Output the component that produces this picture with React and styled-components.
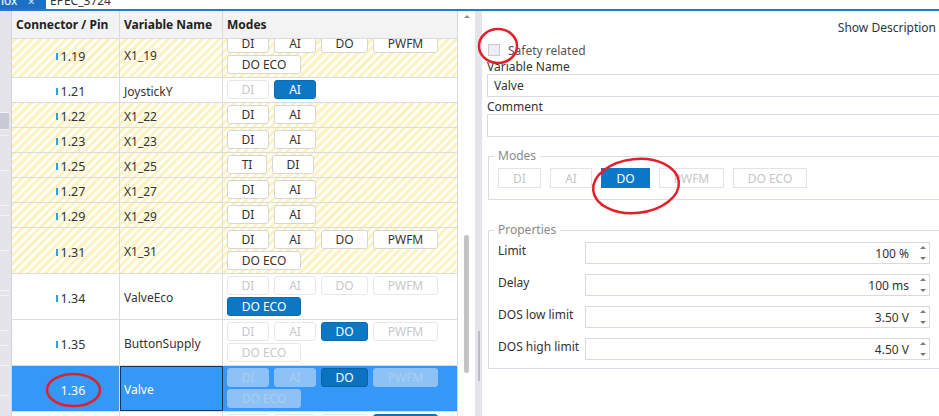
import React from 'react';
import styled, { createGlobalStyle } from 'styled-components';

const GlobalStyle = createGlobalStyle`
  html, body {
    margin: 0;
    padding: 0;
    background: #fff;
  }
  body {
    font-family: 'Noto Sans', 'Open Sans', sans-serif;
    font-size: 12px;
    color: #333;
  }
  * {
    box-sizing: border-box;
  }
`;

const modeWidths = { DI: 42, AI: 42, TI: 40, DO: 47, PWFM: 65, 'DO ECO': 74 };
const panelModeWidths = { DI: 43, AI: 42, DO: 49, PWFM: 65, 'DO ECO': 74 };
const allModes = ['DI', 'AI', 'DO', 'PWFM', 'DO ECO'];

const rows = [
    { pin: '1.19', name: 'X1_19', modes: allModes, hatch: true },
    { pin: '1.21', name: 'JoystickY', modes: ['DI', 'AI'], active: 'AI' },
    { pin: '1.22', name: 'X1_22', modes: ['DI', 'AI'], hatch: true },
    { pin: '1.23', name: 'X1_23', modes: ['DI', 'AI'], hatch: true },
    { pin: '1.25', name: 'X1_25', modes: ['TI', 'DI'], hatch: true },
    { pin: '1.27', name: 'X1_27', modes: ['DI', 'AI'], hatch: true },
    { pin: '1.29', name: 'X1_29', modes: ['DI', 'AI'], hatch: true },
    { pin: '1.31', name: 'X1_31', modes: allModes, hatch: true },
    { pin: '1.34', name: 'ValveEco', modes: allModes, active: 'DO ECO' },
    { pin: '1.35', name: 'ButtonSupply', modes: allModes, active: 'DO' },
    { pin: '1.36', name: 'Valve', modes: allModes, active: 'DO', selected: true },
    { pin: '1.37', name: 'Buzzer', modes: allModes, active: 'PWFM' },
];

const properties = [
    { label: 'Limit', value: '100 %' },
    { label: 'Delay', value: '100 ms' },
    { label: 'DOS low limit', value: '3.50 V' },
    { label: 'DOS high limit', value: '4.50 V' },
];

const SpinArrows = () => (
    <svg width="6" height="16" viewBox="0 0 6 16">
        <path d="M3 1 L6 4 L0 4 Z" fill="#7a7a7a" />
        <path d="M0 12 L6 12 L3 15 Z" fill="#7a7a7a" />
    </svg>
);

const ModeButton = ({ label, row }) => {
    let state = 'normal';
    if (row.active) state = row.active === label ? 'active' : 'off';
    return (
        <CellButton $w={modeWidths[label]} $state={state} $selected={row.selected}>
            {label}
        </CellButton>
    );
};

const App = () => {
    return (
        <>
            <GlobalStyle />
            <Page>
                <TabBar>
                    <Tab $active>
                        <span>lox</span>
                        <TabClose>×</TabClose>
                    </Tab>
                    <Tab>
                        <span>EPEC_3724</span>
                    </Tab>
                </TabBar>
                <TabLine />
                <Main>
                    <SideStrip>
                        <StripBlock $h={102} />
                        <StripBlock $h={17} $dark />
                        <StripBlock $h={6} />
                        <StripBlock $h={35} />
                        <StripBlock $h={35} />
                        <StripBlock $h={10} />
                        <StripBlock $h={35} />
                        <StripBlock $h={40} />
                        <StripBlock $h={5} />
                        <StripBlock $h={35} />
                        <StripBlock $h={15} />
                        <StripBlock $h={20} />
                        <StripBlock $h={30} />
                    </SideStrip>
                    <TablePane>
                        <HeaderRow>
                            <HeaderCell>Connector / Pin</HeaderCell>
                            <HeaderCell>Variable Name</HeaderCell>
                            <HeaderCell>Modes</HeaderCell>
                        </HeaderRow>
                        <BodyViewport>
                            <BodyScroll>
                                {rows.map((row) => (
                                    <Row key={row.pin} $hatch={row.hatch} $selected={row.selected}>
                                        <PinCell $selected={row.selected}>
                                            <Tick />
                                            {row.pin}
                                        </PinCell>
                                        <NameCell $selected={row.selected}>{row.name}</NameCell>
                                        <ModesCell>
                                            {row.modes.map((m) => (
                                                <ModeButton key={m} label={m} row={row} />
                                            ))}
                                        </ModesCell>
                                    </Row>
                                ))}
                            </BodyScroll>
                        </BodyViewport>
                    </TablePane>
                    <ScrollBar>
                        <ArrowUp />
                        <Thumb />
                    </ScrollBar>
                    <Splitter>
                        <Grip />
                    </Splitter>
                    <RightPane>
                        <ShowDesc>Show Description</ShowDesc>
                        <CheckRow>
                            <CheckBox />
                            <CheckLabel>Safety related</CheckLabel>
                        </CheckRow>
                        <FieldLabel>Variable Name</FieldLabel>
                        <TextInput>Valve</TextInput>
                        <FieldLabel $top={2}>Comment</FieldLabel>
                        <TextInput />
                        <GroupBox $top={11} $bottom={11}>
                            <Legend>Modes</Legend>
                            <ModeBar>
                                {allModes.map((m) => (
                                    <PanelMode key={m} $w={panelModeWidths[m]} $active={m === 'DO'}>
                                        {m}
                                    </PanelMode>
                                ))}
                            </ModeBar>
                        </GroupBox>
                        <GroupBox $top={22} $bottom={8}>
                            <Legend>Properties</Legend>
                            <PropList>
                                {properties.map((p) => (
                                    <PropRow key={p.label}>
                                        <PropLabel>{p.label}</PropLabel>
                                        <SpinBox>
                                            <span>{p.value}</span>
                                            <SpinArrows />
                                        </SpinBox>
                                    </PropRow>
                                ))}
                            </PropList>
                        </GroupBox>
                    </RightPane>
                </Main>
                <Marks width="939" height="416" viewBox="0 0 939 416">
                    <ellipse cx="498" cy="46" rx="19" ry="17" />
                    <ellipse cx="636" cy="186" rx="43" ry="27" transform="rotate(-6 636 186)" />
                    <ellipse cx="73.5" cy="390" rx="26.5" ry="16" />
                </Marks>
            </Page>
        </>
    );
};

export default App;

const Page = styled.div`
    position: relative;
    width: 939px;
    height: 416px;
    overflow: hidden;
    display: flex;
    flex-direction: column;
`;

const TabBar = styled.div`
    height: 9px;
    display: flex;
    overflow: hidden;
`;

const Tab = styled.div`
    height: 9px;
    display: flex;
    align-items: flex-end;
    gap: 10px;
    padding: 0 6px 0 ${(p) => (p.$active ? '1px' : '4px')};
    width: ${(p) => (p.$active ? '46px' : 'auto')};
    background: ${(p) => (p.$active ? '#1c6fc2' : '#fff')};
    color: ${(p) => (p.$active ? '#fff' : '#333')};
    font-size: 12px;
    line-height: 14px;

    & > span {
        margin-bottom: 1px;
    }
`;

const TabClose = styled.span`
    font-size: 13px;
    color: #cfe3f7;
`;

const TabLine = styled.div`
    height: 2px;
    background: #1f7bd2;
`;

const Main = styled.div`
    flex: 1;
    min-height: 0;
    display: flex;
`;

const SideStrip = styled.div`
    width: 12px;
    background: #e4e4ea;
    border-right: 1px solid #d2d2da;
    display: flex;
    flex-direction: column;
`;

const StripBlock = styled.div`
    height: ${(p) => p.$h}px;
    flex-shrink: 0;
    background: ${(p) => (p.$dark ? '#c9c9d5' : 'transparent')};
    border-bottom: 1px solid #f3f3f7;
    margin-right: 2px;
`;

const TablePane = styled.div`
    width: 446px;
    display: flex;
    flex-direction: column;
    border-right: 1px solid #dadada;
`;

const columns = '108px 103px 1fr';

const HeaderRow = styled.div`
    display: grid;
    grid-template-columns: ${columns};
    height: 28px;
    flex-shrink: 0;
    background: #f3f3f3;
    border-bottom: 1px solid #dadada;
`;

const HeaderCell = styled.div`
    display: flex;
    align-items: center;
    padding-left: 4px;
    font-weight: 700;
    color: #222;
    border-right: 1px solid #dadada;

    &:last-child {
        border-right: none;
    }
`;

const BodyViewport = styled.div`
    flex: 1;
    overflow: hidden;
`;

const BodyScroll = styled.div`
    margin-top: -7px;
`;

const hatch = 'repeating-linear-gradient(135deg, #fcf2c2 0 3px, #fffef6 3px 6px)';

const Row = styled.div`
    display: grid;
    grid-template-columns: ${columns};
    border-bottom: 1px solid #dcdcdc;
    background: ${(p) => (p.$selected ? '#3597f7' : p.$hatch ? hatch : '#fff')};
`;

const Cell = styled.div`
    display: flex;
    align-items: center;
    border-right: 1px solid #dcdcdc;
`;

const PinCell = styled(Cell)`
    justify-content: center;
    color: ${(p) => (p.$selected ? '#fff' : '#333')};
    padding: 3px 0 0 10px;
    font-size: 12.5px;
`;

const Tick = styled.span`
    width: 2px;
    height: 7px;
    background: #29a6df;
    margin-right: 3px;
`;

const NameCell = styled(Cell)`
    padding: 2px 0 0 4px;
    color: ${(p) => (p.$selected ? '#fff' : '#333')};
    ${(p) => p.$selected && 'outline: 1px solid #1d3554; outline-offset: -1px;'}
`;

const ModesCell = styled.div`
    display: flex;
    flex-wrap: wrap;
    align-content: flex-start;
    gap: 2px 5px;
    padding: 2px 4px 3px;
`;

const buttonLook = {
    normal: { bg: '#fff', border: '#d6d6d6', color: '#333' },
    off: { bg: '#fff', border: '#e8e8e8', color: '#c8c8c8' },
    active: { bg: '#0b77c5', border: '#0a6cb4', color: '#fff' },
};

const selectedLook = {
    off: { bg: '#8ec2f6', border: '#8ec2f6', color: '#a9cdf1' },
    active: { bg: '#0b72c0', border: '#0a62a6', color: '#fff' },
};

const pick = (p) => (p.$selected ? selectedLook : buttonLook)[p.$state] || buttonLook.normal;

const CellButton = styled.div`
    width: ${(p) => p.$w}px;
    height: 19px;
    display: flex;
    align-items: center;
    justify-content: center;
    border-radius: 3px;
    background: ${(p) => pick(p).bg};
    border: 1px solid ${(p) => pick(p).border};
    color: ${(p) => pick(p).color};
    font-size: 12px;
`;

const ScrollBar = styled.div`
    width: 17px;
    display: flex;
    flex-direction: column;
    align-items: center;
    background: #fff;
`;

const ArrowUp = styled.div`
    margin-top: 4px;
    width: 0;
    height: 0;
    border-left: 3px solid transparent;
    border-right: 3px solid transparent;
    border-bottom: 3px solid #8a8a8a;
`;

const Thumb = styled.div`
    margin-top: 217px;
    width: 5px;
    height: 138px;
    border-radius: 2px;
    background: #c4c4c4;
`;

const Splitter = styled.div`
    width: 7px;
    background: #e4e4eb;
    display: flex;
    flex-direction: column;
    align-items: center;
`;

const Grip = styled.div`
    margin-top: 320px;
    width: 2px;
    height: 50px;
    background: #bcbcc8;
`;

const RightPane = styled.div`
    flex: 1;
    min-width: 0;
    display: flex;
    flex-direction: column;
    padding-left: 5px;
    color: #333;
`;

const ShowDesc = styled.div`
    height: 30px;
    padding: 9px 3px 0 0;
    line-height: 16px;
    text-align: right;
`;

const CheckRow = styled.div`
    height: 18px;
    display: flex;
    align-items: center;
    gap: 8px;
    padding-left: 1px;
`;

const CheckBox = styled.div`
    width: 12px;
    height: 12px;
    border: 1px solid #c9c9d1;
    background: #eeeef2;
`;

const CheckLabel = styled.span`
    color: #555;
`;

const FieldLabel = styled.div`
    height: 15px;
    line-height: 15px;
    margin-top: ${(p) => p.$top || 0}px;
`;

const TextInput = styled.div`
    height: 23px;
    margin-right: -14px;
    border: 1px solid #d9d9e3;
    padding: 0 6px;
    display: flex;
    align-items: center;
`;

const GroupBox = styled.fieldset`
    margin: ${(p) => p.$top}px -14px 0 1px;
    padding: 4px 22px ${(p) => p.$bottom}px 9px;
    border: 1px solid #dcdce6;
    min-width: 0;
`;

const Legend = styled.legend`
    padding: 0 4px;
    margin-left: -4px;
    line-height: 16px;
    color: #8a8a8a;
`;

const ModeBar = styled.div`
    display: flex;
    gap: 9px;
`;

const PanelMode = styled.div`
    width: ${(p) => p.$w}px;
    height: 20px;
    display: flex;
    align-items: center;
    justify-content: center;
    border: 1px solid ${(p) => (p.$active ? '#0a78c8' : '#e2e2e8')};
    background: ${(p) => (p.$active ? '#0a78c8' : '#fff')};
    color: ${(p) => (p.$active ? '#fff' : '#c6c6c6')};
`;

const PropList = styled.div`
    display: flex;
    flex-direction: column;
    gap: 10px;
`;

const PropRow = styled.div`
    display: grid;
    grid-template-columns: 87px 1fr;
    height: 22px;
`;

const PropLabel = styled.div`
    padding-top: 1px;
    line-height: 16px;
`;

const SpinBox = styled.div`
    display: flex;
    align-items: center;
    justify-content: flex-end;
    gap: 11px;
    padding-right: 3px;
    border: 1px solid #d9d9e3;
`;

const Marks = styled.svg`
    position: absolute;
    left: 0;
    top: 0;
    pointer-events: none;

    ellipse {
        fill: none;
        stroke: #e3202a;
        stroke-width: 2.5;
    }
`;
